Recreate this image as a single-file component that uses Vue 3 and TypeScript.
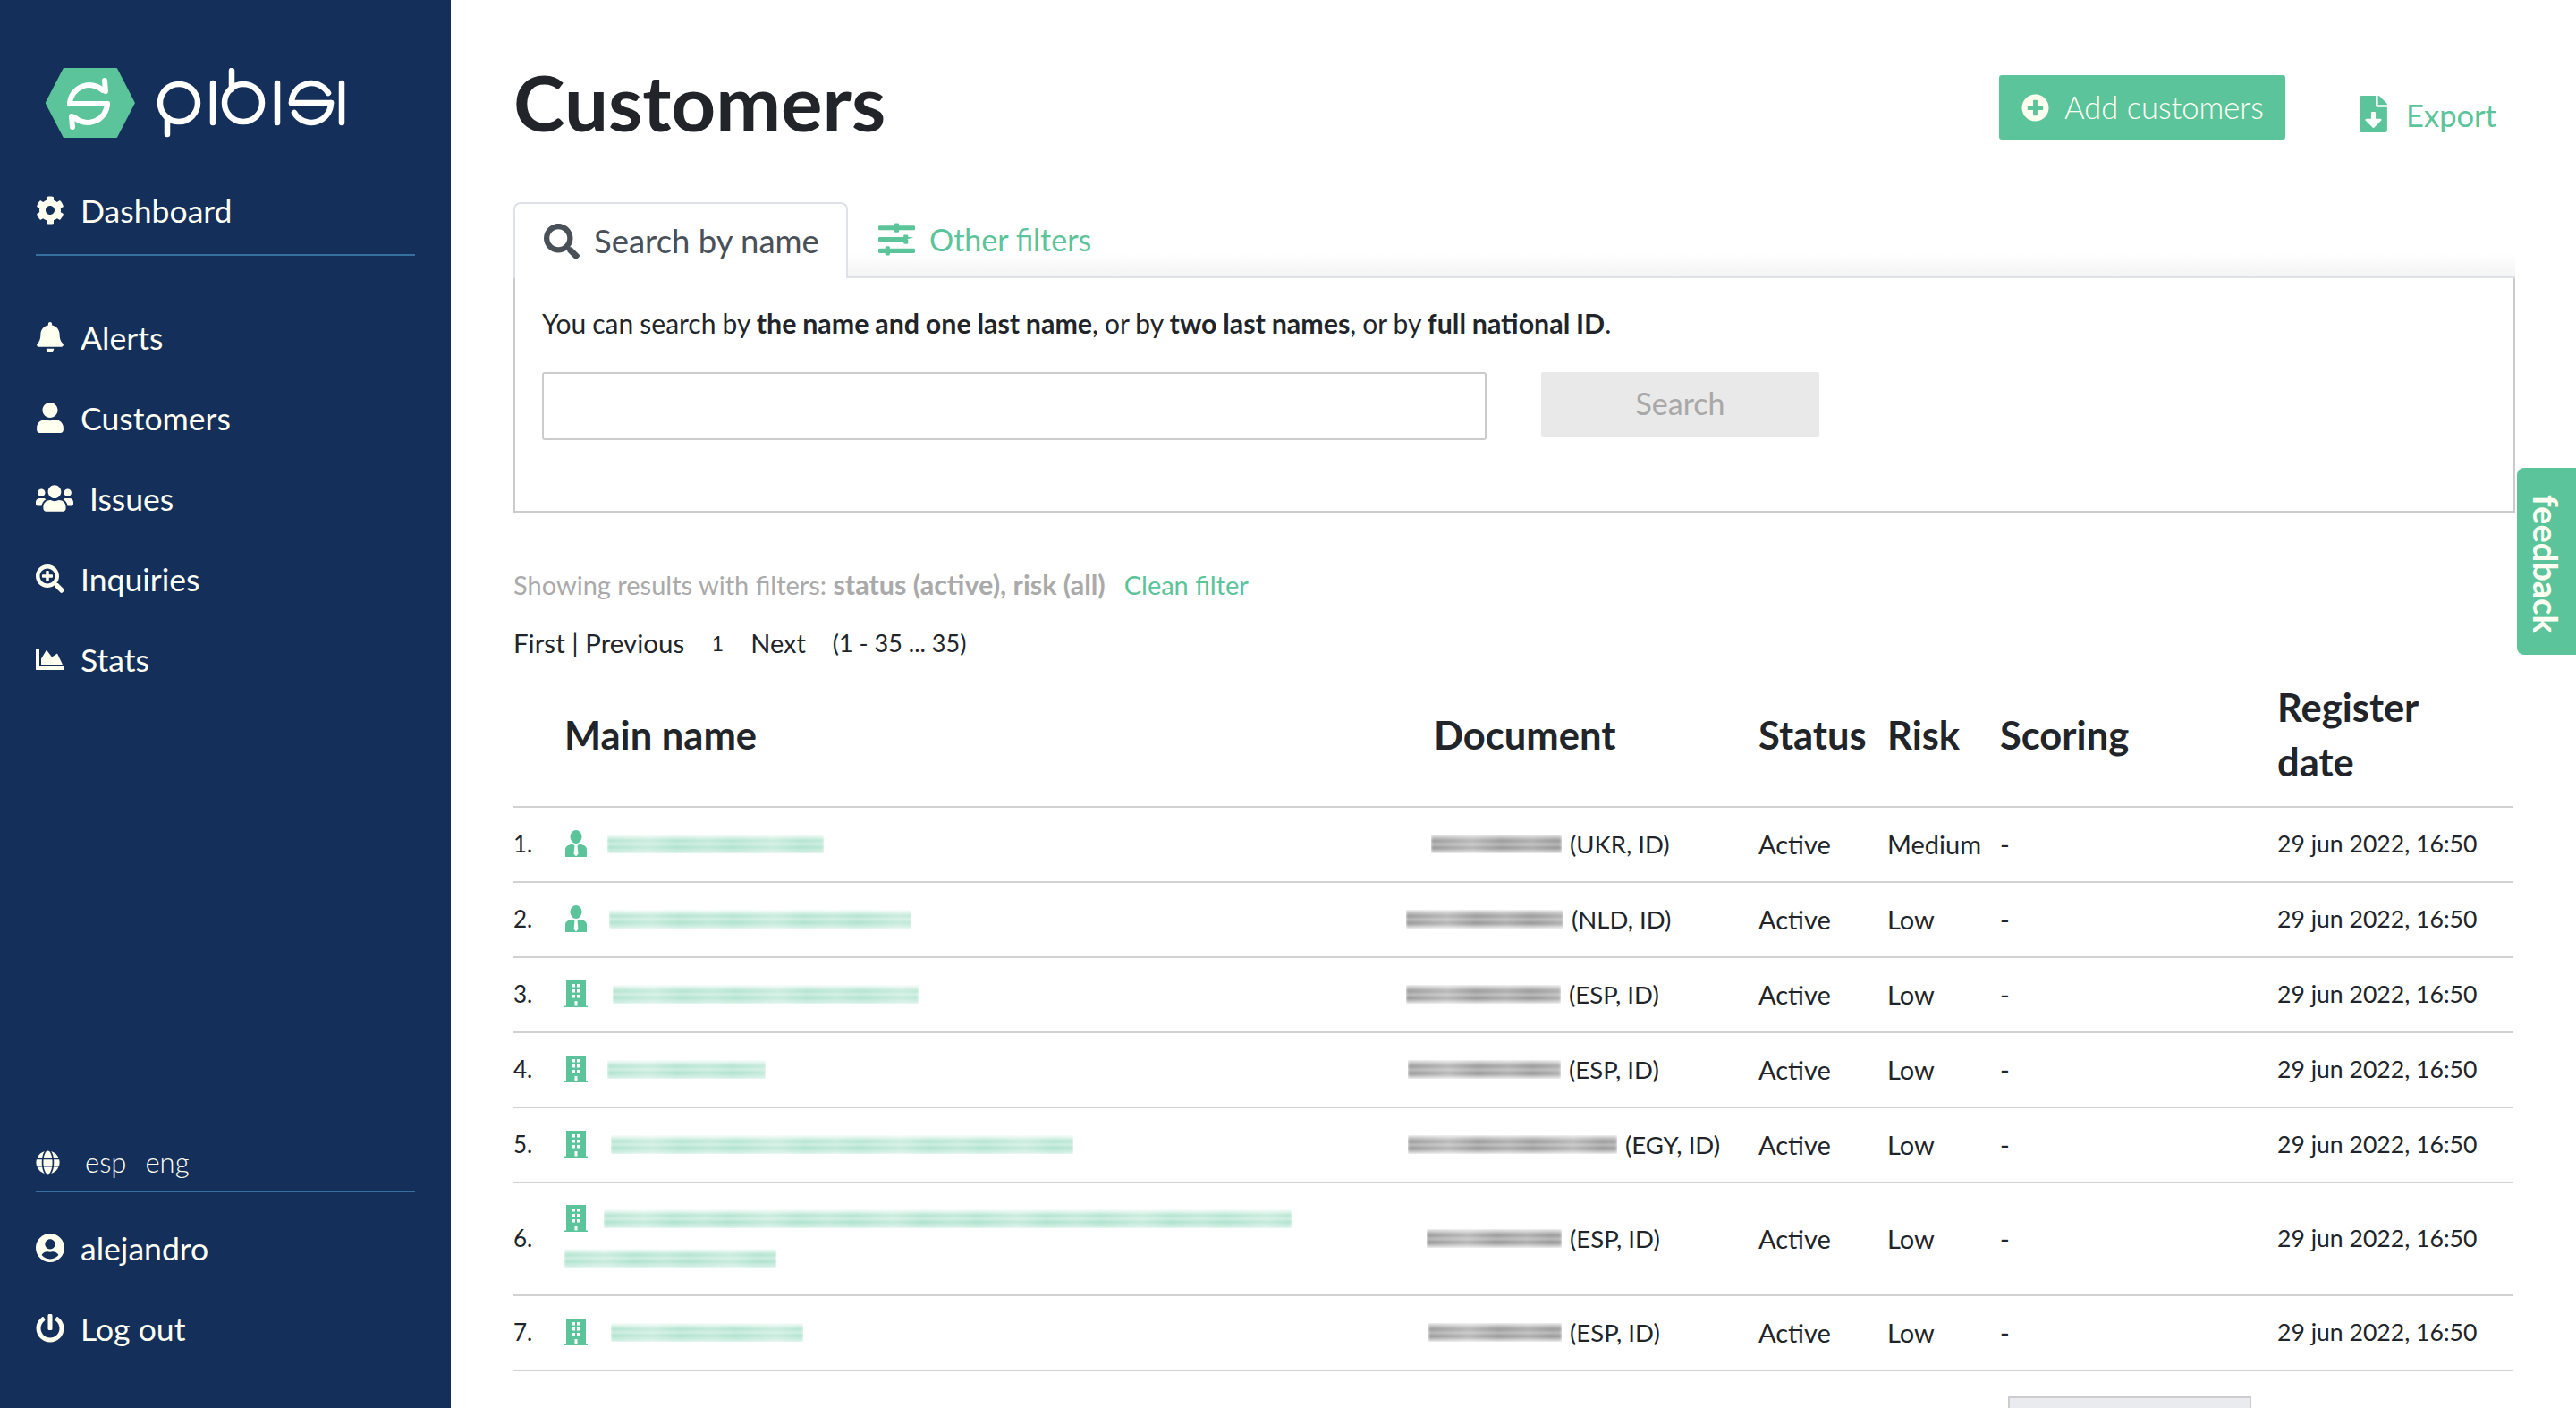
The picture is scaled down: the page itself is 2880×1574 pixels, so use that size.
<script setup lang="ts">
interface Row {
  n: number;
  kind: "person" | "company";
  gap: number;
  nameW: number;
  nameW2?: number;
  docLeft: number;
  docW: number;
  doc: string;
  risk: string;
}

const rows: Row[] = [
  { n: 1, kind: "person", gap: 22, nameW: 242, docLeft: 40, docW: 146, doc: "(UKR, ID)", risk: "Medium" },
  { n: 2, kind: "person", gap: 24, nameW: 338, docLeft: 12, docW: 176, doc: "(NLD, ID)", risk: "Low" },
  { n: 3, kind: "company", gap: 28, nameW: 342, docLeft: 12, docW: 173, doc: "(ESP, ID)", risk: "Low" },
  { n: 4, kind: "company", gap: 22, nameW: 177, docLeft: 14, docW: 171, doc: "(ESP, ID)", risk: "Low" },
  { n: 5, kind: "company", gap: 26, nameW: 517, docLeft: 14, docW: 234, doc: "(EGY, ID)", risk: "Low" },
  { n: 6, kind: "company", gap: 18, nameW: 769, nameW2: 237, docLeft: 35, docW: 151, doc: "(ESP, ID)", risk: "Low" },
  { n: 7, kind: "company", gap: 26, nameW: 215, docLeft: 37, docW: 149, doc: "(ESP, ID)", risk: "Low" },
];

const navItems = [
  { label: "Alerts", box: "0 0 448 512", d: "M224 512c35.32 0 63.97-28.65 63.97-64H160.03c0 35.35 28.65 64 63.97 64zm215.39-149.71c-19.32-20.76-55.47-51.99-55.47-154.29 0-77.7-54.48-139.9-127.94-155.16V32c0-17.67-14.32-32-31.98-32s-31.98 14.33-31.98 32v20.84C118.56 68.1 64.08 130.3 64.08 208c0 102.3-36.15 133.53-55.47 154.29-6 6.45-8.66 14.16-8.61 21.71.11 16.4 12.98 32 32.1 32h383.8c19.12 0 32-15.6 32.1-32 .05-7.55-2.61-15.27-8.61-21.71z" },
  { label: "Customers", box: "0 0 448 512", d: "M224 256c70.7 0 128-57.3 128-128S294.7 0 224 0 96 57.3 96 128s57.3 128 128 128zm89.6 32h-16.7c-22.2 10.2-46.9 16-72.9 16s-50.6-5.8-72.9-16h-16.7C60.2 288 0 348.2 0 422.4V464c0 26.5 21.5 48 48 48h352c26.5 0 48-21.5 48-48v-41.6c0-74.2-60.2-134.4-134.4-134.4z" },
  { label: "Issues", box: "0 0 640 512", wide: true, d: "M96 224c35.3 0 64-28.7 64-64s-28.7-64-64-64-64 28.7-64 64 28.7 64 64 64zm448 0c35.3 0 64-28.7 64-64s-28.7-64-64-64-64 28.7-64 64 28.7 64 64 64zm32 32h-64c-17.6 0-33.5 7.1-45.1 18.6 40.3 22.1 68.9 62 75.1 109.4h66c17.7 0 32-14.3 32-32v-32c0-35.3-28.7-64-64-64zm-256 0c61.9 0 112-50.1 112-112S381.9 32 320 32 208 82.1 208 144s50.1 112 112 112zm76.8 32h-8.3c-20.8 10-43.9 16-68.5 16s-47.6-6-68.5-16h-8.3C179.6 288 128 339.6 128 403.2V432c0 26.5 21.5 48 48 48h288c26.5 0 48-21.5 48-48v-28.8c0-63.6-51.6-115.2-115.2-115.2zm-223.7-13.4C161.5 263.1 145.6 256 128 256H64c-35.3 0-64 28.7-64 64v32c0 17.7 14.3 32 32 32h65.9c6.3-47.4 34.9-87.3 75.2-109.4z" },
  { label: "Inquiries", box: "0 0 512 512", d: "M304 192v32c0 6.6-5.4 12-12 12h-56v56c0 6.6-5.4 12-12 12h-32c-6.6 0-12-5.4-12-12v-56h-56c-6.6 0-12-5.4-12-12v-32c0-6.6 5.4-12 12-12h56v-56c0-6.6 5.4-12 12-12h32c6.6 0 12 5.4 12 12v56h56c6.6 0 12 5.4 12 12zm201 284.7L476.7 505c-9.4 9.4-24.6 9.4-33.9 0L343 405.3c-4.5-4.5-7-10.6-7-17V372c-35.3 27.6-79.7 44-128 44C93.1 416 0 322.9 0 208S93.1 0 208 0s208 93.1 208 208c0 48.3-16.4 92.7-44 128h16.3c6.4 0 12.5 2.5 17 7l99.7 99.7c9.3 9.4 9.3 24.6 0 34zM344 208c0-75.2-60.8-136-136-136S72 132.8 72 208s60.8 136 136 136 136-60.8 136-136z" },
  { label: "Stats", box: "0 0 512 512", d: "M500 384c6.6 0 12 5.4 12 12v40c0 6.6-5.4 12-12 12H12c-6.6 0-12-5.4-12-12V76c0-6.6 5.4-12 12-12h40c6.6 0 12 5.4 12 12v308h436zM372.7 159.5L288 216l-85.3-113.7c-5.1-6.8-15.5-6.3-19.9 1L96 248v104h384l-89.9-187.8c-3.2-6.5-11.4-8.7-17.4-4.7z" },
];

const cog = "M487.4 315.7l-42.6-24.6c4.3-23.2 4.3-47 0-70.2l42.6-24.6c4.9-2.8 7.1-8.6 5.5-14-11.1-35.6-30-67.8-54.7-94.6-3.8-4.1-10-5.1-14.8-2.3L380.8 110c-17.9-15.4-38.5-27.3-60.8-35.1V25.8c0-5.6-3.9-10.5-9.4-11.7-36.7-8.2-74.3-7.8-109.2 0-5.5 1.2-9.4 6.1-9.4 11.7V75c-22.2 7.9-42.8 19.8-60.8 35.1L88.7 85.5c-4.9-2.8-11-1.9-14.8 2.3-24.7 26.7-43.6 58.9-54.7 94.6-1.7 5.4.6 11.2 5.5 14L67.3 221c-4.3 23.2-4.3 47 0 70.2l-42.6 24.6c-4.9 2.8-7.1 8.6-5.5 14 11.1 35.6 30 67.8 54.7 94.6 3.8 4.1 10 5.1 14.8 2.3l42.6-24.6c17.9 15.4 38.5 27.3 60.8 35.1v49.2c0 5.6 3.9 10.5 9.4 11.7 36.7 8.2 74.3 7.8 109.2 0 5.5-1.2 9.4-6.1 9.4-11.7v-49.2c22.2-7.9 42.8-19.8 60.8-35.1l42.6 24.6c4.9 2.8 11 1.9 14.8-2.3 24.7-26.7 43.6-58.9 54.7-94.6 1.5-5.5-.7-11.3-5.6-14.1zM256 336c-44.1 0-80-35.9-80-80s35.9-80 80-80 80 35.9 80 80-35.9 80-80 80z";
const globe = "M336.5 160C322 70.7 287.8 8 248 8s-74 62.7-88.5 152h177zM152 256c0 22.2 1.2 43.5 3.3 64h185.3c2.1-20.5 3.3-41.8 3.3-64s-1.2-43.5-3.3-64H155.3c-2.1 20.5-3.3 41.8-3.3 64zm324.7-96c-28.6-67.9-86.5-120.4-158-141.6 24.4 33.8 41.2 84.7 50 141.6h108zM177.2 18.4C105.8 39.6 47.8 92.1 19.3 160h108c8.7-56.9 25.5-107.8 49.9-141.6zM487.4 192H372.7c2.1 21 3.3 42.5 3.3 64s-1.2 43-3.3 64h114.6c5.5-20.5 8.6-41.8 8.6-64s-3.1-43.5-8.5-64zM120 256c0-21.5 1.2-43 3.3-64H8.6C3.2 212.5 0 233.8 0 256s3.2 43.5 8.6 64h114.6c-2-21-3.2-42.5-3.2-64zm39.5 96c14.5 89.3 48.7 152 88.5 152s74-62.7 88.5-152h-177zm159.3 141.6c71.4-21.2 129.4-73.7 158-141.6h-108c-8.8 56.9-25.6 107.8-50 141.6zM19.3 352c28.6 67.9 86.5 120.4 158 141.6-24.4-33.8-41.2-84.7-50-141.6h-108z";
const userCircle = "M248 8C111 8 0 119 0 256s111 248 248 248 248-111 248-248S385 8 248 8zm0 96c48.6 0 88 39.4 88 88s-39.4 88-88 88-88-39.4-88-88 39.4-88 88-88zm0 344c-58.7 0-111.3-26.6-146.5-68.2 18.8-35.4 55.6-59.8 98.5-59.8 2.4 0 4.8.4 7.1 1.1 13 4.2 26.6 6.9 40.9 6.9 14.3 0 28-2.7 40.9-6.9 2.3-.7 4.7-1.1 7.1-1.1 42.9 0 79.7 24.4 98.5 59.8C359.3 421.4 306.7 448 248 448z";
const power = "M400 54.1c63 45 104 118.6 104 201.9 0 136.8-110.8 247.7-247.5 248C120 504.3 8.2 393 8 256.4 7.9 173.1 48.9 99.3 111.8 54.2c11.7-8.3 28-4.8 35 7.7L162.6 90c5.9 10.5 3.1 23.8-6.6 31-41.5 30.8-68 79.6-68 134.9-.1 92.3 74.5 168.1 168 168.1 91.6 0 168.6-74.2 168-169.1-.3-51.8-24.7-101.8-68.1-134-9.7-7.2-12.4-20.5-6.5-30.9l15.8-28.1c7-12.4 23.2-16.1 34.8-7.8zM296 264V24c0-13.3-10.7-24-24-24h-32c-13.3 0-24 10.7-24 24v240c0 13.3 10.7 24 24 24h32c13.3 0 24-10.7 24-24z";
const plusCircle = "M256 8C119 8 8 119 8 256s111 248 248 248 248-111 248-248S393 8 256 8zm144 276c0 6.6-5.4 12-12 12h-92v92c0 6.6-5.4 12-12 12h-56c-6.6 0-12-5.4-12-12v-92h-92c-6.6 0-12-5.4-12-12v-56c0-6.6 5.4-12 12-12h92v-92c0-6.6 5.4-12 12-12h56c6.6 0 12 5.4 12 12v92h92c6.6 0 12 5.4 12 12v56z";
const fileDown = "M224 136V0H24C10.7 0 0 10.7 0 24v464c0 13.3 10.7 24 24 24h336c13.3 0 24-10.7 24-24V160H248c-13.2 0-24-10.8-24-24zm76.45 211.36l-96.42 95.7c-6.65 6.61-17.39 6.61-24.04 0l-96.42-95.7C73.42 337.29 80.54 320 94.82 320H160v-80c0-8.84 7.16-16 16-16h32c8.84 0 16 7.16 16 16v80h65.18c14.28 0 21.4 17.29 11.27 27.36zM377 105L279.1 7c-4.5-4.5-10.6-7-17-7H256v128h128v-6.1c0-6.3-2.5-12.4-7-16.9z";
const search = "M505 442.7L405.3 343c-4.5-4.5-10.6-7-17-7H372c27.6-35.3 44-79.7 44-128C416 93.1 322.9 0 208 0S0 93.1 0 208s93.1 208 208 208c48.3 0 92.7-16.4 128-44v16.3c0 6.4 2.5 12.5 7 17l99.7 99.7c9.4 9.4 24.6 9.4 33.9 0l28.3-28.3c9.4-9.4 9.4-24.6.1-34zM208 336c-70.7 0-128-57.2-128-128 0-70.7 57.2-128 128-128 70.7 0 128 57.2 128 128 0 70.7-57.2 128-128 128z";
const sliders = "M496 384H160v-16c0-8.8-7.2-16-16-16h-32c-8.8 0-16 7.2-16 16v16H16c-8.8 0-16 7.2-16 16v32c0 8.8 7.2 16 16 16h80v16c0 8.8 7.2 16 16 16h32c8.8 0 16-7.2 16-16v-16h336c8.8 0 16-7.2 16-16v-32c0-8.8-7.2-16-16-16zm0-160h-80v-16c0-8.8-7.2-16-16-16h-32c-8.8 0-16 7.2-16 16v16H16c-8.8 0-16 7.2-16 16v32c0 8.8 7.2 16 16 16h336v16c0 8.8 7.2 16 16 16h32c8.8 0 16-7.2 16-16v-32c0-8.8-7.2-16-16-16zm0-160H288V48c0-8.8-7.2-16-16-16h-32c-8.8 0-16 7.2-16 16v16H16C7.2 64 0 71.2 0 80v32c0 8.8 7.2 16 16 16h208v16c0 8.8 7.2 16 16 16h32c8.8 0 16-7.2 16-16v-16h208c8.8 0 16-7.2 16-16V80c0-8.8-7.2-16-16-16z";
</script>

<template>
  <div class="page">
    <aside class="sidebar">
      <svg class="logo" viewBox="0 0 340 80" role="img" aria-label="pibisi">
        <polygon points="26,1 98,1 122,39 98,77 26,77 2,39" transform="translate(-1 1) scale(0.82 1) translate(0 -1)" fill="#5bc49a" stroke="#5bc49a" stroke-width="2" stroke-linejoin="round" />
        <g fill="none" stroke="#fff" stroke-width="6" stroke-linecap="round">
          <path d="M27 40h42" />
          <path d="M27 40a22 22 0 0 1 37-15" />
          <path d="M69 40a22 22 0 0 1-37 15" />
          <path d="M66 14l1 12M30 66l-1-12" />
        </g>
        <g fill="none" stroke="#fff" stroke-width="6.500" stroke-linecap="round">
          <circle cx="149" cy="39" r="21" />
          <line x1="136" y1="55" x2="136" y2="74" />
          <line x1="187" y1="17" x2="187" y2="61" />
          <circle cx="221" cy="39" r="21" />
          <line x1="208" y1="3" x2="208" y2="24" />
          <line x1="259" y1="17" x2="259" y2="61" />
          <line x1="275" y1="39" x2="319" y2="39" />
          <line x1="331" y1="17" x2="331" y2="61" />
          <path d="M275 39a22 22 0 0 1 41-11" />
          <path d="M319 39a22 22 0 0 1-41 11" />
        </g>
      </svg>

      <a class="nav-item dash">
        <svg class="nav-icon" viewBox="0 0 512 512"><path :d="cog" /></svg>
        <span>Dashboard</span>
      </a>
      <div class="rule"></div>

      <nav class="nav-list">
        <a v-for="item in navItems" :key="item.label" class="nav-item">
          <svg class="nav-icon" :class="{ wide: item.wide }" :viewBox="item.box"><path :d="item.d" /></svg>
          <span>{{ item.label }}</span>
        </a>
      </nav>

      <div class="sidebar-foot">
        <div class="lang">
          <svg class="globe" viewBox="0 0 496 512"><path :d="globe" /></svg>
          <span>esp</span>
          <span>eng</span>
        </div>
        <div class="rule"></div>
        <a class="nav-item user">
          <svg class="nav-icon" viewBox="0 0 496 512"><path :d="userCircle" /></svg>
          <span>alejandro</span>
        </a>
        <a class="nav-item">
          <svg class="nav-icon" viewBox="0 0 512 512"><path :d="power" /></svg>
          <span>Log out</span>
        </a>
      </div>
    </aside>

    <main class="main">
      <header class="head">
        <h1>Customers</h1>
        <button class="add-btn">
          <svg viewBox="0 0 512 512"><path :d="plusCircle" /></svg>
          <span>Add customers</span>
        </button>
        <a class="export">
          <svg viewBox="0 0 384 512"><path :d="fileDown" /></svg>
          <span>Export</span>
        </a>
      </header>

      <div class="tabs">
        <div class="tab active">
          <svg viewBox="0 0 512 512"><path :d="search" /></svg>
          <span>Search by name</span>
        </div>
        <div class="tab other">
          <svg viewBox="0 0 512 512"><path :d="sliders" /></svg>
          <span>Other filters</span>
        </div>
      </div>

      <section class="panel">
        <p>You can search by <b>the name and one last name</b>, or by <b>two last names</b>, or by <b>full national ID</b>.</p>
        <div class="search-row">
          <input type="text" />
          <button class="search-btn">Search</button>
        </div>
      </section>

      <p class="filters">
        Showing results with filters: <b>status (active), risk (all)</b>
        <a>Clean filter</a>
      </p>

      <div class="pager">
        <span>First | Previous</span>
        <span>1</span>
        <span>Next</span>
        <span>(1 - 35 ... 35)</span>
      </div>

      <div class="table">
        <div class="row thead">
          <div></div>
          <div>Main name</div>
          <div class="doc-th">Document</div>
          <div>Status</div>
          <div>Risk</div>
          <div>Scoring</div>
          <div>Register<br />date</div>
        </div>
        <div v-for="r in rows" :key="r.n" class="row body-row" :class="{ tall: r.nameW2 }">
          <div class="num">{{ r.n }}.</div>
          <div class="name">
            <div class="name-line">
              <svg v-if="r.kind === 'person'" class="kind" viewBox="0 0 26 30">
                <ellipse cx="13" cy="7.5" rx="6.500" ry="7.5" />
                <path d="M1 30v-8c0-4 3-5.500 8-6.500l2.500 2-1 9 2.500 3 2.500-3-1-9 2.500-2c5 1 8 2.500 8 6.500v8z" />
              </svg>
              <svg v-else class="kind" viewBox="0 0 26 30">
                <path fill-rule="evenodd" d="M2 0h22v28.500h2V30H0v-1.500h2zM8 4v3.500h4V4zm6 0v3.500h4V4zM8 10v3.500h4V10zm6 0v3.500h4V10zM8 16v3.500h4V16zm6 0v3.500h4V16zM11.500 23v5.500h3V23z" />
              </svg>
              <span class="smear green" :style="{ width: r.nameW + 'px', marginLeft: r.gap + 'px' }"></span>
            </div>
            <div v-if="r.nameW2" class="name-line">
              <span class="smear green" :style="{ width: r.nameW2 + 'px' }"></span>
            </div>
          </div>
          <div class="doc">
            <span class="smear grey" :style="{ width: r.docW + 'px', marginLeft: r.docLeft + 'px' }"></span>
            <span>{{ r.doc }}</span>
          </div>
          <div>Active</div>
          <div>{{ r.risk }}</div>
          <div>-</div>
          <div class="date">29 jun 2022, 16:50</div>
        </div>
      </div>

      <div class="more-wrap">
        <div class="more"></div>
      </div>
    </main>

    <div class="feedback">feedback</div>
  </div>
</template>

<style>
html,
body {
  margin: 0;
  overflow: hidden;
  background: #fff;
}
</style>

<style scoped>
.page {
  display: flex;
  height: 1574px;
  overflow: hidden;
  font-family: Lato, "Noto Sans", sans-serif;
  color: #212529;
  position: relative;
}

.sidebar {
  width: 504px;
  flex: none;
  background: #142f59;
  color: #fffff4;
  padding: 76px 40px 0;
  box-sizing: border-box;
  display: flex;
  flex-direction: column;
}
.logo {
  width: 340px;
  height: 80px;
  margin-left: 11px;
  flex: none;
}
.nav-item {
  display: flex;
  align-items: center;
  height: 50px;
  font-size: 35.6px;
  gap: 18px;
}
.nav-icon {
  width: 32px;
  height: 34px;
  fill: #fffff0;
  flex: none;
}
.nav-icon.wide {
  width: 42px;
}
.dash {
  margin-top: 54px;
}
.rule {
  height: 2px;
  background: #36709f;
  width: 424px;
}
.dash + .rule {
  margin-top: 24px;
}
.nav-list {
  display: flex;
  flex-direction: column;
  gap: 40px;
  margin-top: 66px;
}
.sidebar-foot {
  margin-top: auto;
  padding-bottom: 64px;
}
.lang {
  display: flex;
  align-items: center;
  height: 40px;
  font-size: 31px;
  font-weight: 300;
  gap: 21px;
  margin-bottom: 12px;
}
.lang span:first-of-type {
  margin-left: -1px;
}
.globe {
  width: 27px;
  height: 27px;
  fill: #fffff0;
  margin-right: 8px;
}
.user {
  margin-top: 37px;
  margin-bottom: 40px;
}

.main {
  flex: 1;
  min-width: 0;
  padding: 84px 68px 0 70px;
}
.head {
  display: flex;
  align-items: flex-start;
  height: 72px;
}
h1 {
  margin: -2px auto 0 0;
  font-size: 87px;
  line-height: 64px;
  font-weight: 700;
}
.add-btn {
  width: 320px;
  height: 72px;
  background: #5bc49a;
  border: 0;
  border-radius: 3px;
  color: #fffff4;
  font: 300 34.5px Lato, sans-serif;
  display: flex;
  align-items: center;
  gap: 17px;
  padding: 0 0 0 25px;
}
.add-btn span {
  margin-top: -2px;
}
.add-btn svg {
  width: 31px;
  height: 31px;
  fill: #fffff0;
}
.export {
  display: flex;
  align-items: center;
  gap: 21px;
  color: #5bc49a;
  font-size: 34.5px;
  margin: 21px 21px 0 83px;
}
.export span {
  margin-top: 3px;
}
.export svg {
  width: 31px;
  height: 41px;
  fill: #5bc49a;
}

.tabs {
  display: flex;
  height: 85px;
  margin-top: 70px;
}
.tab {
  display: flex;
  align-items: center;
  font-size: 36.5px;
}
.tab span {
  margin-top: -2px;
}
.tab svg {
  flex: none;
}
.tab.active {
  width: 374px;
  box-sizing: border-box;
  border: 2px solid #dee2e6;
  border-bottom: 0;
  border-radius: 8px 8px 0 0;
  padding-left: 32px;
  gap: 16px;
  color: #495057;
}
.tab.active svg {
  width: 40px;
  height: 40px;
  fill: #495057;
}
.tab.other {
  flex: 1;
  padding-left: 34px;
  gap: 16px;
  color: #5bc49a;
  font-size: 34px;
  border-bottom: 2px solid #dee2e6;
  background: linear-gradient(180deg, #fff 70%, #f3f3f5 100%);
}
.tab.other span {
  margin-top: 0;
}
.tab.other svg {
  width: 41px;
  height: 41px;
  fill: #5bc49a;
}

.panel {
  height: 262px;
  box-sizing: border-box;
  border: 2px solid #ccc;
  border-top: 0;
  padding: 30px 30px 0;
}
.panel p {
  margin: 0;
  font-size: 30px;
  line-height: 40px;
  word-spacing: -0.6px;
}
.panel b {
  font-size: 30.4px;
}
.search-row {
  display: flex;
  align-items: flex-start;
  gap: 61px;
  margin-top: 35px;
}
.search-row input {
  width: 1056px;
  height: 76px;
  box-sizing: border-box;
  border: 2px solid #ccc;
  border-radius: 3px;
  background: #fff;
}
.search-btn {
  width: 311px;
  height: 72px;
  border: 0;
  border-radius: 2px;
  background: #e9e9e9;
  color: #a8a8a8;
  font: 400 34px Lato, sans-serif;
  padding: 0 0 3px;
}

.filters {
  margin: 60px 0 0;
  font-size: 29px;
  line-height: 40px;
  color: #aaa;
}
.filters b {
  font-size: 30.5px;
}
.filters a {
  color: #5bc49a;
  margin-left: 21px;
}
.pager {
  display: flex;
  margin-top: 24px;
  height: 40px;
  align-items: center;
  font-size: 29.5px;
}
.pager span:nth-child(2) {
  margin-left: 30px;
  font-size: 24px;
}
.pager span:nth-child(3) {
  margin-left: 30px;
  font-size: 29px;
}
.pager span:nth-child(4) {
  margin-left: 30px;
  font-size: 27px;
}

.table {
  margin-top: 3px;
  margin-right: 2px;
}
.row {
  display: grid;
  grid-template-columns: 57px 929px 406px 144px 126px 310px 1fr;
  align-items: center;
  height: 84px;
  box-sizing: border-box;
  border-bottom: 2px solid #d2d2d2;
  font-size: 29px;
}
.body-row > div {
  padding-bottom: 2px;
}
.row.tall {
  height: 126px;
}
.thead {
  height: 162px;
  font-size: 43.5px;
  font-weight: 700;
  line-height: 61px;
}
.doc-th {
  padding-left: 43px;
}
.num {
  font-size: 26px;
}
.date {
  font-size: 26.6px;
}
.name-line {
  display: flex;
  align-items: center;
  height: 44px;
}
.kind {
  width: 26px;
  height: 30px;
  fill: #5bc49a;
  flex: none;
}
.smear {
  display: block;
  height: 21px;
  flex: none;
  filter: blur(1.5px);
  -webkit-mask-image: repeating-linear-gradient(90deg, #000 0, rgba(0, 0, 0, 0.72) 46px, #000 78px, rgba(0, 0, 0, 0.82) 112px, #000 139px);
  mask-image: repeating-linear-gradient(90deg, #000 0, rgba(0, 0, 0, 0.72) 46px, #000 78px, rgba(0, 0, 0, 0.82) 112px, #000 139px);
}
.smear.green {
  background: linear-gradient(180deg, rgba(91, 196, 154, 0.05) 0, rgba(91, 196, 154, 0.25) 18%, rgba(91, 196, 154, 0.55) 34%, rgba(91, 196, 154, 0.22) 50%, rgba(91, 196, 154, 0.6) 68%, rgba(91, 196, 154, 0.25) 82%, rgba(91, 196, 154, 0.45) 94%, rgba(91, 196, 154, 0.05) 100%);
}
.smear.grey {
  background: linear-gradient(180deg, rgba(90, 90, 90, 0.12) 0, rgba(90, 90, 90, 0.4) 18%, rgba(90, 90, 90, 0.68) 36%, rgba(90, 90, 90, 0.32) 52%, rgba(90, 90, 90, 0.72) 70%, rgba(90, 90, 90, 0.38) 85%, rgba(90, 90, 90, 0.15) 100%);
}
.doc {
  display: flex;
  align-items: center;
  gap: 9px;
  font-size: 27.5px;
}

.more-wrap {
  display: flex;
  justify-content: flex-end;
  margin-top: 28px;
  padding-right: 295px;
}
.more {
  width: 272px;
  height: 40px;
  box-sizing: border-box;
  border: 2px solid #ccc;
  background: #e9ebef;
}

.feedback {
  position: absolute;
  right: 0;
  top: 523px;
  width: 66px;
  height: 209px;
  box-sizing: border-box;
  padding-top: 5px;
  background: #5bc49a;
  border-radius: 8px 0 0 8px;
  color: #fffff4;
  font-size: 38px;
  font-weight: 700;
  writing-mode: vertical-rl;
  display: flex;
  align-items: center;
  justify-content: center;
}
</style>
